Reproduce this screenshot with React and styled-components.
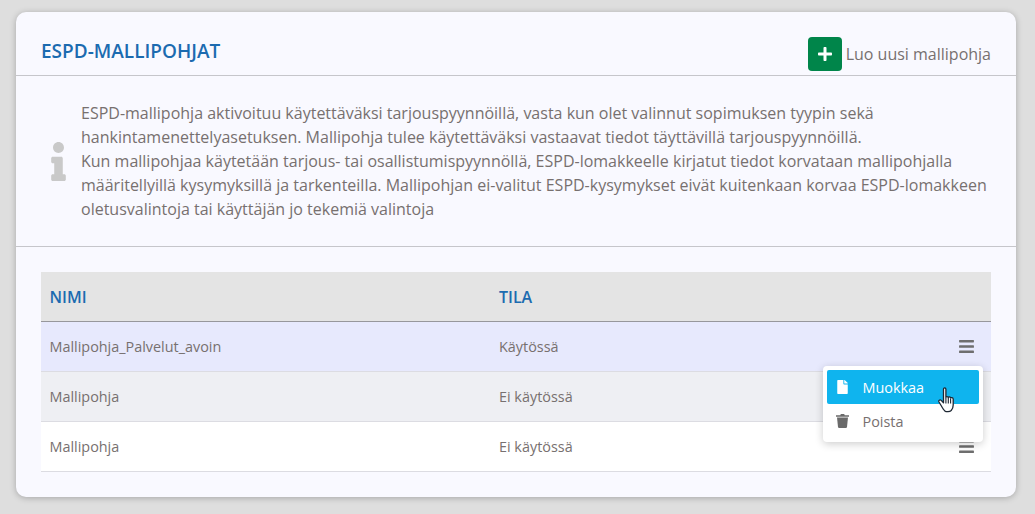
import React from 'react';
import styled, { createGlobalStyle } from 'styled-components';
import { FaPlus, FaInfo, FaBars, FaFile } from 'react-icons/fa';

const GlobalStyle = createGlobalStyle`
    html, body {
        margin:0;
        padding:0;
        background:#dedede;
        font-family:"Open Sans", "Liberation Sans", sans-serif;
        overflow:hidden;
    }
`

const rows = [
    { name: 'Mallipohja_Palvelut_avoin', status: 'Käytössä', bg: '#e7e9fd' },
    { name: 'Mallipohja', status: 'Ei käytössä', bg: '#eeeff3' },
    { name: 'Mallipohja', status: 'Ei käytössä', bg: '#ffffff' },
]

const HandCursor = () => (
    <CursorSvg viewBox="0 0 18 26" width="18" height="26">
        <path
            d="M5.500 2.200c0-1.700 2.400-1.700 2.400 0v8.300c.2-1.300 2.300-1.300 2.400.2.300-1.100 2.200-1 2.300.5.400-.9 2.600-.7 2.600 1v5.800c0 2.800-.8 4.200-2 5.500-1.600 1.500-4.800 1.600-6.400.4C5 22.500 3 18 1 15c-.9-1.500 1-2.900 2.200-1.600l2.300 2.400z"
            fill="#fff"
            stroke="#1d2733"
            strokeWidth="1.300"
            strokeLinejoin="round"
        />
        <path d="M7.900 11v5.500M10.300 11v5.500M12.600 12v4.500" stroke="#1d2733" strokeWidth="1.100" fill="none" />
    </CursorSvg>
)

const TrashIcon = () => (
    <svg viewBox="0 0 13 14" fill="currentColor">
        <path d="M0 1.300h4.300L4.800 0h3.400l.5 1.300H13v1.500H0z" />
        <path d="M1 3.600h11l-1 9.400c-.1.600-.5 1-1.100 1H3.100c-.6 0-1-.4-1.100-1z" />
    </svg>
)

const App = () => {
    return (
        <Page>
            <GlobalStyle />
            <Card>
                <Header>
                    <Title>ESPD-MALLIPOHJAT</Title>
                    <NewLink>
                        <GreenButton><FaPlus /></GreenButton>
                        Luo uusi mallipohja
                    </NewLink>
                </Header>

                <InfoSection>
                    <InfoIcon><FaInfo /></InfoIcon>
                    <InfoText>
                        ESPD-mallipohja aktivoituu käytettäväksi tarjouspyynnöillä, vasta kun olet valinnut sopimuksen tyypin sekä
                        hankintamenettelyasetuksen. Mallipohja tulee käytettäväksi vastaavat tiedot täyttävillä tarjouspyynnöillä.<br />
                        Kun mallipohjaa käytetään tarjous- tai osallistumispyynnöllä, ESPD-lomakkeelle kirjatut tiedot korvataan mallipohjalla
                        määritellyillä kysymyksillä ja tarkenteilla. Mallipohjan ei-valitut ESPD-kysymykset eivät kuitenkaan korvaa ESPD-lomakkeen
                        oletusvalintoja tai käyttäjän jo tekemiä valintoja
                    </InfoText>
                </InfoSection>

                <TableWrap>
                    <HeadRow>
                        <NameCol>NIMI</NameCol>
                        <StatusCol>TILA</StatusCol>
                    </HeadRow>
                    {rows.map((row, i) => (
                        <Row key={i} $bg={row.bg}>
                            <NameCol>{row.name}</NameCol>
                            <StatusCol>{row.status}</StatusCol>
                            <MenuButton><FaBars /></MenuButton>
                        </Row>
                    ))}
                    <Menu>
                        <MenuItem $active>
                            <MenuIcon><FaFile /></MenuIcon>
                            Muokkaa
                        </MenuItem>
                        <MenuItem>
                            <MenuIcon $dark><TrashIcon /></MenuIcon>
                            Poista
                        </MenuItem>
                        <HandCursor />
                    </Menu>
                </TableWrap>
            </Card>
        </Page>
    )
}

export default App;


const Page = styled.div`
    padding:12px 19px 17px 16px;
    height:514px;
    box-sizing:border-box;
`

const Card = styled.div`
    background:#f9f9ff;
    border-radius:10px;
    box-shadow:0 1px 6px rgba(0,0,0,.25);
    height:485px;
    box-sizing:border-box;
`

const Header = styled.div`
    height:64px;
    box-sizing:border-box;
    display:flex;
    justify-content:space-between;
    align-items:flex-start;
    padding:0 25px;
    border-bottom:1px solid #c6c6cb;
`

const Title = styled.h1`
    margin:26px 0 0;
    font-size:19px;
    line-height:26px;
    font-weight:600;
    color:#1c6bb0;
`

const NewLink = styled.div`
    display:flex;
    align-items:center;
    gap:4px;
    margin-top:25px;
    font-size:16px;
    line-height:34px;
    color:#77706f;
`

const GreenButton = styled.span`
    width:34px;
    height:34px;
    background:#00854a;
    border-radius:4px;
    color:#fff;
    display:flex;
    align-items:center;
    justify-content:center;
    font-size:16px;
`

const InfoSection = styled.div`
    height:171px;
    box-sizing:border-box;
    display:flex;
    align-items:center;
    padding:0 25px 0 35px;
    border-bottom:1px solid #c6c6cb;
`

const InfoIcon = styled.div`
    flex:0 0 30px;
    display:flex;
    color:#c9c9c9;
    svg { width:15px; height:39px; }
`

const InfoText = styled.p`
    margin:0;
    font-size:16px;
    line-height:24px;
    color:#77706f;
`

const TableWrap = styled.div`
    position:relative;
    margin:25px 25px 0;
`

const HeadRow = styled.div`
    display:flex;
    align-items:center;
    height:50px;
    box-sizing:border-box;
    background:#e4e4e4;
    border-bottom:1px solid #97979c;
    color:#1c6bb0;
    font-size:16px;
    font-weight:600;
`

const Row = styled.div`
    display:flex;
    align-items:center;
    height:50px;
    box-sizing:border-box;
    background:${props => props.$bg};
    border-bottom:1px solid #dcdce2;
    font-size:14.400px;
    color:#77706f;
`

const NameCol = styled.div`
    flex:0 0 458px;
    padding-left:8.500px;
    box-sizing:border-box;
`

const StatusCol = styled.div`
    flex:1;
`

const MenuButton = styled.span`
    display:flex;
    margin-right:17px;
    color:#6e6e6e;
    font-size:16px;
    svg { width:15px; height:17px; }
`

const Menu = styled.div`
    position:absolute;
    top:94px;
    left:782px;
    width:160px;
    padding:4px;
    box-sizing:border-box;
    background:#fff;
    border-radius:4px;
    box-shadow:0 2px 8px rgba(0,0,0,.2);
`

const MenuItem = styled.div`
    display:flex;
    align-items:center;
    height:34px;
    border-radius:2px;
    padding-left:8.500px;
    font-size:14.400px;
    background:${props => props.$active ? '#0fb4ee' : 'transparent'};
    color:${props => props.$active ? '#fff' : '#77706f'};
`

const MenuIcon = styled.span`
    display:flex;
    width:27px;
    color:${props => props.$dark ? '#6a6a6a' : 'inherit'};
    svg { width:13px; height:14px; }
`

const CursorSvg = styled.svg`
    position:absolute;
    left:115px;
    top:21px;
`
